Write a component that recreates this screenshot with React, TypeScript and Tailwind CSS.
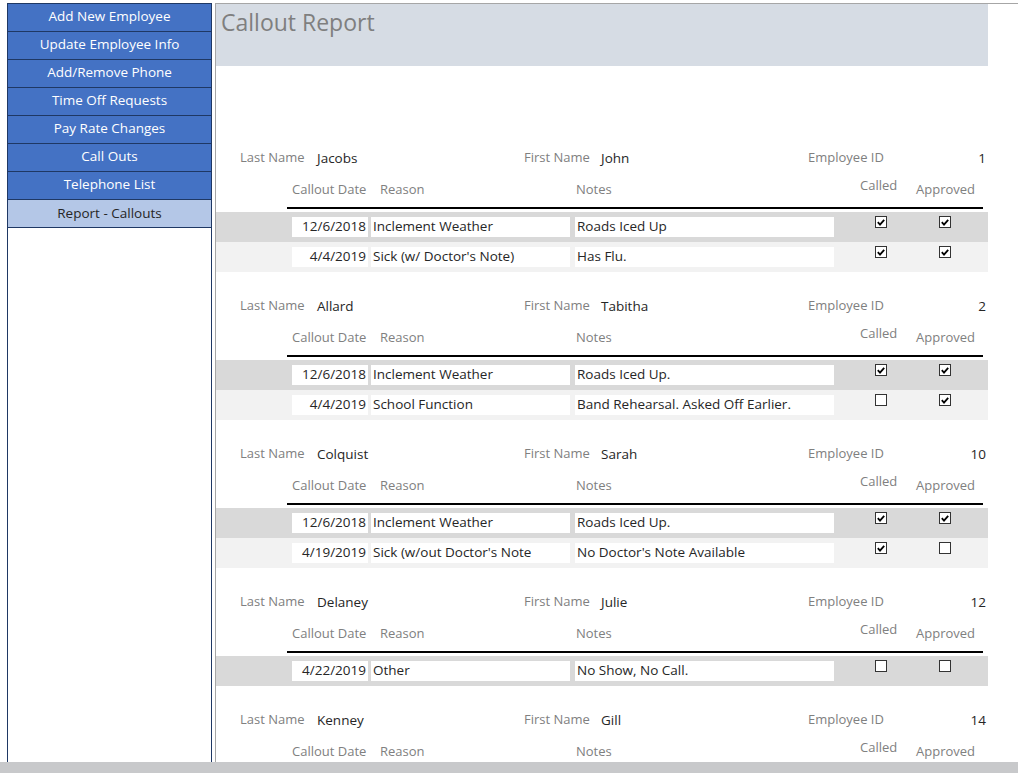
import { Fragment } from "react";

type Callout = {
  date: string;
  reason: string;
  notes: string;
  called: boolean;
  approved: boolean;
};

type Employee = {
  id: number;
  last: string;
  first: string;
  callouts: Callout[];
};

const menu = [
  "Add New Employee",
  "Update Employee Info",
  "Add/Remove Phone",
  "Time Off Requests",
  "Pay Rate Changes",
  "Call Outs",
  "Telephone List",
];

const employees: Employee[] = [
  {
    id: 1,
    last: "Jacobs",
    first: "John",
    callouts: [
      { date: "12/6/2018", reason: "Inclement Weather", notes: "Roads Iced Up", called: true, approved: true },
      { date: "4/4/2019", reason: "Sick (w/ Doctor's Note)", notes: "Has Flu.", called: true, approved: true },
    ],
  },
  {
    id: 2,
    last: "Allard",
    first: "Tabitha",
    callouts: [
      { date: "12/6/2018", reason: "Inclement Weather", notes: "Roads Iced Up.", called: true, approved: true },
      { date: "4/4/2019", reason: "School Function", notes: "Band Rehearsal. Asked Off Earlier.", called: false, approved: true },
    ],
  },
  {
    id: 10,
    last: "Colquist",
    first: "Sarah",
    callouts: [
      { date: "12/6/2018", reason: "Inclement Weather", notes: "Roads Iced Up.", called: true, approved: true },
      { date: "4/19/2019", reason: "Sick (w/out Doctor's Note", notes: "No Doctor's Note Available", called: true, approved: false },
    ],
  },
  {
    id: 12,
    last: "Delaney",
    first: "Julie",
    callouts: [
      { date: "4/22/2019", reason: "Other", notes: "No Show, No Call.", called: false, approved: false },
    ],
  },
  {
    id: 14,
    last: "Kenney",
    first: "Gill",
    callouts: [],
  },
];

function Check({ on }: { on: boolean }) {
  return (
    <div className="w-[12px] h-[12px] border border-[#333] bg-white flex items-center justify-center">
      {on && (
        <svg width="8" height="7" viewBox="0 0 8 7">
          <path d="M0.8 3.2 L3 5.6 L7.2 0.8" fill="none" stroke="#000" strokeWidth="1.8" />
        </svg>
      )}
    </div>
  );
}

function EmployeeGroup({ e }: { e: Employee }) {
  return (
    <div className="pt-[24px]">
      <div className="flex h-5 items-center pl-[24px]">
        <span className="w-[77px] text-[#808080]">Last Name</span>
        <span className="w-[207px] text-[13.5px] text-[#262626]">{e.last}</span>
        <span className="w-[77px] text-[#808080]">First Name</span>
        <span className="w-[207px] text-[13.5px] text-[#262626]">{e.first}</span>
        <span className="text-[#808080]">Employee ID</span>
        <span className="flex-1 text-right pr-[2px] text-[13.5px] text-[#262626]">{e.id}</span>
      </div>
      <div className="flex h-5 items-center pl-[76px] mt-[12px] text-[#808080]">
        <span className="w-[88px]">Callout Date</span>
        <span className="w-[196px]">Reason</span>
        <span className="w-[284px]">Notes</span>
        <span className="w-[56px] relative -top-[4px]">Called</span>
        <span>Approved</span>
      </div>
      <div className="ml-[71px] w-[696px] h-[2px] bg-black mt-[7px]" />
      <div className="mt-[3px]">
        {e.callouts.map((c, i) => (
          <div
            key={i}
            className={`flex h-[30px] pl-[76px] text-[13.5px] ${i % 2 === 0 ? "bg-[#d9d9d9]" : "bg-[#f2f2f2]"}`}
          >
            <div className="mt-[5px] h-5 w-[76px] bg-white text-right pr-[2px] leading-[19px] text-[#262626]">{c.date}</div>
            <div className="mt-[5px] h-5 w-[199px] ml-[3px] bg-white pl-[2px] leading-[19px] text-[#262626]">{c.reason}</div>
            <div className="mt-[5px] h-5 w-[259px] ml-[5px] bg-white pl-[2px] leading-[19px] text-[#262626]">{c.notes}</div>
            <div className="mt-[4px] ml-[41px]">
              <Check on={c.called} />
            </div>
            <div className="mt-[4px] ml-[52px]">
              <Check on={c.approved} />
            </div>
          </div>
        ))}
      </div>
    </div>
  );
}

export default function App() {
  return (
    <div
      className="w-[1018px] h-[773px] overflow-hidden bg-white flex flex-col text-[13px]"
      style={{ fontFamily: '"Open Sans", "Noto Sans", sans-serif' }}
    >
      <div className="flex flex-1 min-h-0 pt-[3px] pl-[7px]">
        <div className="w-[205px] border border-[#1f3864] border-b-0 bg-white flex flex-col text-[13.5px]">
          {menu.map((m) => (
            <div
              key={m}
              className="h-[28px] border-b border-[#1f3864] bg-[#4472c4] text-white flex items-center justify-center pb-[2px]"
            >
              {m}
            </div>
          ))}
          <div className="h-[28px] border-b border-[#1f3864] bg-[#b4c7e7] text-[#262626] flex items-center justify-center">
            Report - Callouts
          </div>
        </div>
        <div className="ml-[3px] flex-1 border-l border-t border-[#a6a6a6] overflow-hidden">
          <div className="w-[772px]">
            <div className="h-[62px] bg-[#d6dce4] pl-[5px] pt-[1px]">
              <span className="text-[23px] text-[#7f7f7f]">Callout Report</span>
            </div>
            <div className="mt-[58px]">
              {employees.map((e) => (
                <Fragment key={e.id}>
                  <EmployeeGroup e={e} />
                </Fragment>
              ))}
            </div>
          </div>
        </div>
      </div>
      <div className="h-[11px] bg-[#c8c9cb] shrink-0" />
    </div>
  );
}
